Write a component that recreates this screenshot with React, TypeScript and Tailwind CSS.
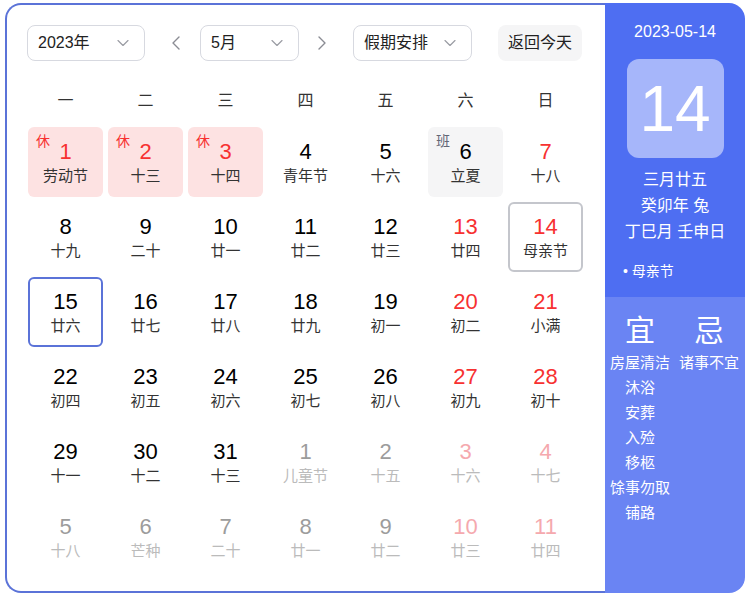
import { ChevronDown, ChevronLeft, ChevronRight } from "lucide-react";

type Day = {
  n: number;
  lunar: string;
  other?: boolean;
  weekend?: boolean;
  tag?: "休" | "班";
  selected?: boolean;
  today?: boolean;
};

const weekdays = ["一", "二", "三", "四", "五", "六", "日"];

const rows: string[][] = [
  ["1:劳动节", "2:十三", "3:十四", "4:青年节", "5:十六", "6:立夏", "7:十八"],
  ["8:十九", "9:二十", "10:廿一", "11:廿二", "12:廿三", "13:廿四", "14:母亲节"],
  ["15:廿六", "16:廿七", "17:廿八", "18:廿九", "19:初一", "20:初二", "21:小满"],
  ["22:初四", "23:初五", "24:初六", "25:初七", "26:初八", "27:初九", "28:初十"],
  ["29:十一", "30:十二", "31:十三", "1:儿童节", "2:十五", "3:十六", "4:十七"],
  ["5:十八", "6:芒种", "7:二十", "8:廿一", "9:廿二", "10:廿三", "11:廿四"],
];

const days: Day[] = rows.flatMap((row, r) =>
  row.map((s, c) => {
    const [n, lunar] = s.split(":");
    const d: Day = { n: Number(n), lunar, weekend: c >= 5 };
    if (r === 5 || (r === 4 && c >= 3)) d.other = true;
    if (r === 0 && c < 3) d.tag = "休";
    if (r === 0 && c === 5) {
      d.tag = "班";
      d.weekend = false;
    }
    if (r === 1 && c === 6) d.selected = true;
    if (r === 2 && c === 0) d.today = true;
    return d;
  })
);

const yi = ["房屋清洁", "沐浴", "安葬", "入殓", "移柩", "馀事勿取", "铺路"];
const ji = ["诸事不宜"];

function Select({ label, width }: { label: string; width: string }) {
  return (
    <div
      className={`${width} h-[36px] flex items-center justify-between pl-[10px] pr-[11px] border border-[#d7d9e0] rounded-[8px] text-[16px] text-[#222]`}
    >
      <span>{label}</span>
      <ChevronDown size={20} strokeWidth={1.4} className="text-[#9a9ca3]" />
    </div>
  );
}

function DayCell({ d }: { d: Day }) {
  let bg = "";
  if (d.tag === "休") bg = "bg-[#fde2e2]";
  if (d.tag === "班") bg = "bg-[#f5f5f6]";
  let border = "border-2 border-transparent";
  if (d.selected) border = "border-2 border-[#c4c6cc]";
  if (d.today) border = "border-2 border-[#5b73d8]";

  const red = d.tag === "休" || d.weekend;
  let numColor = "text-[#000]";
  let lunarColor = "text-[#333]";
  if (red) numColor = "text-[#f73131]";
  if (d.other) {
    numColor = d.weekend ? "text-[#f5a9ae]" : "text-[#9c9c9c]";
    lunarColor = "text-[#bbbbbb]";
  }

  return (
    <div className={`relative h-[70px] rounded-[6px] ${bg} ${border} flex flex-col items-center pt-[10px]`}>
      {d.tag && (
        <span
          className={`absolute top-[4px] left-[6px] text-[14px] leading-[16px] ${
            d.tag === "休" ? "text-[#f73131]" : "text-[#626675]"
          }`}
        >
          {d.tag}
        </span>
      )}
      <span className={`text-[22px] leading-[26px] ${numColor}`}>{d.n}</span>
      <span className={`text-[15px] leading-[20px] mt-[1px] ${lunarColor}`}>{d.lunar}</span>
    </div>
  );
}

export default function App() {
  return (
    <div
      className="pt-[3px] pl-[5px]"
      style={{ fontFamily: '"Liberation Sans", "Noto Sans CJK SC", sans-serif' }}
    >
      <div className="flex w-[740px] h-[590px]">
        {/* Calendar */}
        <div className="w-[600px] h-full border-2 border-r-0 border-[#5b73d8] rounded-l-[16px] pl-[20px] pt-[20px]">
          <div className="flex items-center">
            <Select label="2023年" width="w-[118px]" />
            <div className="ml-[19px] w-[24px] flex justify-center text-[#8a8c93]">
              <ChevronLeft size={26} strokeWidth={1.4} />
            </div>
            <div className="ml-[12px]">
              <Select label="5月" width="w-[99px]" />
            </div>
            <div className="ml-[11px] w-[24px] flex justify-center text-[#8a8c93]">
              <ChevronRight size={26} strokeWidth={1.4} />
            </div>
            <div className="ml-[19px]">
              <Select label="假期安排" width="w-[119px]" />
            </div>
            <div className="ml-[26px] w-[84px] h-[36px] flex items-center justify-center rounded-[8px] bg-[#f5f5f6] text-[16px] text-[#222]">
              返回今天
            </div>
          </div>

          <div className="mt-[20px] ml-[1px] grid grid-cols-[repeat(7,75px)] gap-x-[5px] h-[40px] items-center">
            {weekdays.map((w) => (
              <div key={w} className="text-center text-[16px] text-[#333]">
                {w}
              </div>
            ))}
          </div>

          <div className="mt-[6px] ml-[1px] grid grid-cols-[repeat(7,75px)] gap-[5px]">
            {days.map((d, i) => (
              <DayCell key={i} d={d} />
            ))}
          </div>
        </div>

        {/* Side panel */}
        <div className="w-[140px] h-full rounded-r-[16px] overflow-hidden flex flex-col text-white">
          <div className="h-[294px] bg-[#4e6ef2] flex flex-col items-center pt-[20px]">
            <div className="text-[16px] leading-[18px]">2023-05-14</div>
            <div className="mt-[18px] w-[97px] h-[99px] rounded-[12px] bg-[#a6b6fa] flex items-center justify-center">
              <span className="text-[64px] leading-none">14</span>
            </div>
            <div className="mt-[9px] text-[16px] leading-[26px] text-center">
              <div>三月廿五</div>
              <div>癸卯年 兔</div>
              <div>丁巳月 壬申日</div>
            </div>
            <div className="self-start mt-[17px] pl-[18px] text-[14px] leading-[18px]">• 母亲节</div>
          </div>
          <div className="flex-1 bg-[#6a84f3] flex gap-[7px] pl-[4px] pt-[16px]">
            <div className="w-[62px] flex flex-col items-center">
              <div className="text-[30px] leading-[36px]">宜</div>
              <div className="mt-[1px] flex flex-col items-center text-[15px] leading-[25px]">
                {yi.map((t) => (
                  <div key={t}>{t}</div>
                ))}
              </div>
            </div>
            <div className="w-[62px] flex flex-col items-center">
              <div className="text-[30px] leading-[36px]">忌</div>
              <div className="mt-[1px] flex flex-col items-center text-[15px] leading-[25px]">
                {ji.map((t) => (
                  <div key={t}>{t}</div>
                ))}
              </div>
            </div>
          </div>
        </div>
      </div>
    </div>
  );
}
